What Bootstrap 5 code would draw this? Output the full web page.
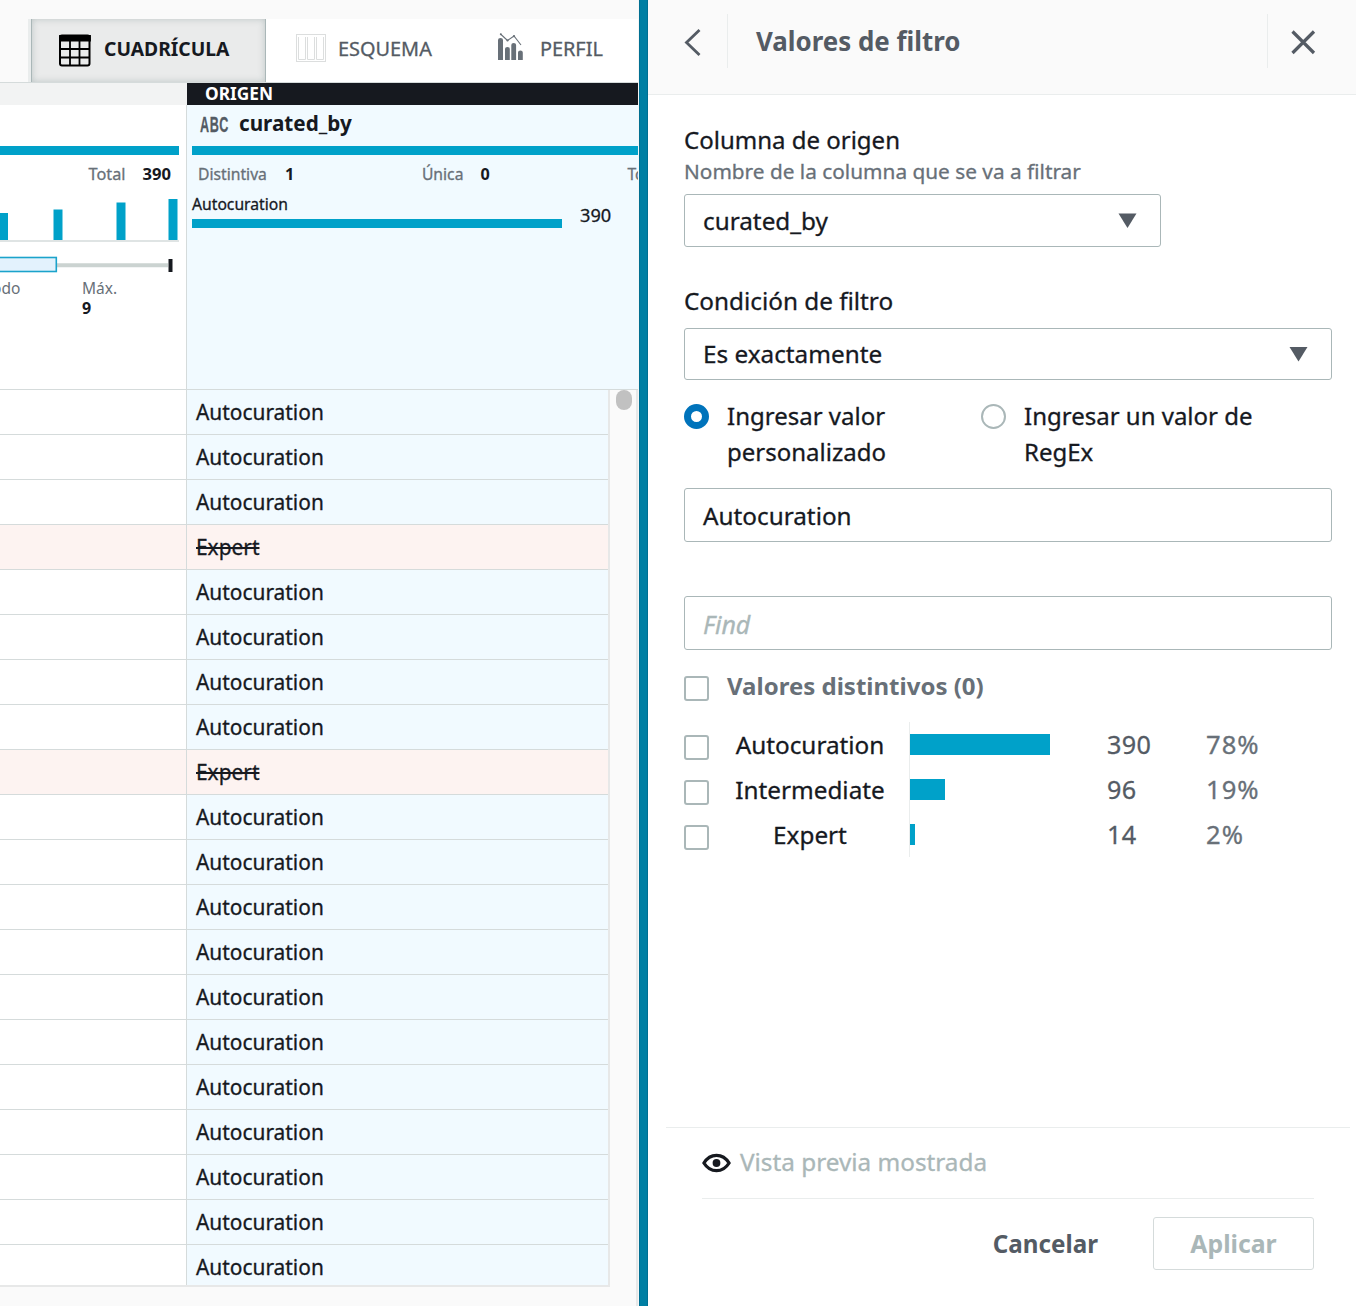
<!DOCTYPE html>
<html lang="es">
<head>
<meta charset="utf-8">
<meta name="viewport" content="width=device-width, initial-scale=1">
<title>Valores de filtro</title>
<link href="https://cdn.jsdelivr.net/npm/bootstrap@5.3.0/dist/css/bootstrap.min.css" rel="stylesheet">
<style>
  body { font-family: "Noto Sans", "Open Sans", sans-serif; color: #16191f; background: #fff; height: 1306px; overflow: hidden; line-height: 1; -webkit-text-stroke: .3px; }
  b, h1, .fw-bold, .btn-x, .origin, .col-name, .active-tab { -webkit-text-stroke: 0; }
  svg { display: block; flex: none; }
  .app { height: 1306px; }
  /* left pane */
  .grid-pane { width: 639px; background: #fafafa; padding-top: 19px; border-right: 1px solid #f4f6f6; }
  .tabs-line { border-bottom: 1px solid #d5dbdb; height: 64px; padding-left: 28px; }
  .tabs-line nav { font-size: 19.9px; color: #545b64; }
  .view-tab { height: 63px; }
  .view-tab > span, .active-in > span { margin-top: -3px; }
  .view-tab.active-tab { width: 238px; border-left: 3px solid #eaeded; background: #eaebeb; color: #16191f; font-weight: 700; font-size: 19.3px; }
  .active-in { border: 1px solid #aab7b8; border-width: 0 1px 0 1px; box-shadow: inset 0 0 7px rgba(120,140,140,.4); padding-left: 26px; gap: 13px; }
  .col-l { width: 187px; border-right: 1px solid #d5dbdb; background: #fff; }
  .col-r { background: #f1faff; }
  .band { height: 22px; }
  .band .col-l { background: #f2f3f3; border-right: 0; }
  .band .origin { background: #16191f; color: #fff; font-weight: 700; font-size: 17.3px; padding-left: 18px; line-height: 21px; }
  .stats { height: 285px; border-bottom: 1px solid #d5dbdb; }
  .teal { background: #00a1c9; }
  .quality { height: 9px; }
  .stat-line { font-size: 15.7px; line-height: 20px; height: 20px; white-space: nowrap; color: #687078; }
  .stat-line b { color: #16191f; font-size: 16.2px; }
  .abc { font-family: "Liberation Sans", sans-serif; font-weight: 700; font-size: 22.5px; color: #545b64; width: 28px; line-height: 31px; margin-left: -1px; }
  .abc span { display: inline-block; transform: scaleX(.56); transform-origin: 0 50%; letter-spacing: 1px; }
  .col-name { font-weight: 700; font-size: 20.7px; line-height: 28px; }
  .rows-box { width: 610px; height: 897px; overflow: hidden; border: solid #e7e8e8; border-width: 0 2px 2px 0; }
  .data-row { height: 45px; font-size: 20.9px; line-height: 44px; border-bottom: 1px solid #d5dbdb; flex: none; }
  .data-row .col-r { padding-left: 9px; }
  .data-row.dropped > div { background: #fdf3f1; }
  .data-row.dropped { text-decoration: line-through; text-decoration-thickness: 2px; }
  .track { width: 28px; border-right: 2px solid #e7e8e8; }
  .thumb { width: 16px; height: 20px; border-radius: 8px; background: #c1c1c1; margin-left: 6px; }
  .splitter { width: 9px; background: #007fa3; border: solid #006f92; border-width: 0 1px; }
  /* right pane */
  .head-bar { height: 95px; background: #fafafa; border-bottom: 1px solid #eaeded; padding-top: 14px; }
  .head-in { height: 54px; }
  .head-in h1 { font-size: 25.9px; line-height: 54px; font-weight: 700; color: #545b64; margin: 0; padding-left: 28px; }
  .rule-v { width: 1px; background: #eaeded; height: 54px; }
  .panel-body { padding: 0 24px 0 36px; height: 1032px; font-size: 24.3px; }
  .fld { border: 1px solid #aab7b8; border-radius: 3px; padding: 0 23px 0 18px; background: #fff; }
  .nudge { padding-top: 2px; }
  .hint { font-size: 20.8px; color: #687078; line-height: 30px; }
  .radio-c { width: 25px; height: 25px; border: 2px solid #aab7b8; border-radius: 50%; margin-top: 6px; flex: none; }
  .radio-c.on { border: 7.5px solid #0073bb; }
  .lh36 { line-height: 36px; }
  .check-b { width: 25px; height: 25px; border: 2px solid #aab7b8; border-radius: 3px; flex: none; }
  .val-row { height: 45px; }
  .val-row .check-b { margin-top: 6px; }
  .val-name { width: 202px; margin-right: -2px; padding-top: 2px; text-align: center; }
  .val-bar { width: 198px; height: 45px; border-left: 1px solid #eaeded; }
  .val-bar div { height: 21px; background: #00a1c9; }
  .val-n { width: 99px; padding-top: 1px; font-size: 25.2px; letter-spacing: .3px; color: #545b64; }
  .val-p { padding-top: 1px; font-size: 25.6px; color: #687078; letter-spacing: 1px; }
  .foot { margin: 0 6px 0 18px; border-top: 1px solid #eaeded; padding: 0 36px; font-size: 24.3px; }
  .foot-a { height: 71px; border-bottom: 1px solid #eaeded; gap: 9px; color: #aab7b8; }
  .foot-a span { margin-top: -2px; }
  .btn-x { font-weight: 700; font-size: 24.2px; line-height: 51px; height: 53px; padding: 0; border-radius: 3px; color: #545b64; }
  .btn-x:disabled { width: 161px; border: 1px solid #d5dbdb; color: #aab7b8; opacity: 1; font-size: 24.8px; }
</style>
<script src="https://cdn.jsdelivr.net/npm/bootstrap@5.3.0/dist/js/bootstrap.bundle.min.js"></script>
</head>
<body>
<div class="app d-flex">
  <section class="grid-pane flex-shrink-0 overflow-hidden">
    <div class="tabs-line d-flex">
      <nav class="d-flex flex-grow-1 bg-white">
        <div class="view-tab active-tab d-flex flex-shrink-0">
          <div class="active-in d-flex align-items-center flex-grow-1">
            <svg width="33" height="33" viewBox="0 0 33 33"><rect x="2" y="1.500" width="29.500" height="30" rx="2" fill="none" stroke="#000" stroke-width="2"/><path d="M2 2h30v4.500H2zM12 6v25M21.500 6v25M2 15h30M2 23.500h30" stroke="#000" stroke-width="1.800" fill="#000"/></svg>
            <span>CUADRÍCULA</span>
          </div>
        </div>
        <div class="view-tab d-flex align-items-center" style="padding-left:30px;gap:12px">
          <svg width="30" height="28" viewBox="0 0 30 28" fill="none" stroke="#dcdede" stroke-width="1" style="margin-top:-5px"><rect x=".5" y=".5" width="29" height="27"/><path d="M2.500 3v22.500h7V3M11.500 3v22.500h7V3M20.500 3v22.500h7V3"/></svg>
          <span>ESQUEMA</span>
        </div>
        <div class="view-tab d-flex align-items-center" style="padding-left:66px;gap:17px">
          <svg width="25" height="28" viewBox="0 0 25 28" fill="#687078" style="margin-top:-7px"><path d="M0 27V7a2.500 2 0 0 1 5 0V27zM7 27V16a2.400 2 0 0 1 4.800 0v11zM13.300 27V12a2.400 2 0 0 1 4.800 0v15zM20 27v-7.500a2.400 2 0 0 1 4.800 0V27z"/><path d="M2.500 1 9.500 7.500l6.500-4.500 7 9" fill="none" stroke="#687078" stroke-width="1.100"/><circle cx="2.800" cy="1.200" r="1"/><circle cx="9.500" cy="7.500" r="1.100"/><circle cx="16" cy="3.200" r="1.100"/></svg>
          <span>PERFIL</span>
        </div>
      </nav>
    </div>
    <div class="band d-flex"><div class="col-l flex-shrink-0"></div><div class="origin flex-grow-1">ORIGEN</div></div>
    <div class="stats d-flex">
      <div class="col-l flex-shrink-0 overflow-hidden">
        <div class="quality teal" style="margin:41px 7px 0 0"></div>
        <div class="stat-line d-flex justify-content-end" style="margin:9px 0 11px;padding-right:15px;gap:17px"><span style="font-size:16.3px">Total</span><b style="font-size:16.6px">390</b></div>
        <svg width="186" height="134" viewBox="0 0 186 134"><path d="M0 46h179" stroke="#d5dbdb" stroke-width="1.500"/><path d="M0 18h8v27H0zM53.500 14.500h9v30.500h-9zM116.500 7.500h9v37.500h-9zM168.500 4h9v41h-9z" fill="#00a1c9"/><path d="M57 70.300h111" stroke="#cbd3d1" stroke-width="4"/><rect x="-5" y="62.500" width="61.300" height="14" fill="#e3f2fd" stroke="#1ba3cb" stroke-width="1.600"/><path d="M170.500 64v13" stroke="#16191f" stroke-width="4"/>
          <g font-size="15.500" fill="#687078"><text x="-8" y="99">odo</text><text x="82" y="99">Máx.</text></g><text x="82" y="119" font-size="16" font-weight="700" fill="#16191f">9</text></svg>
      </div>
      <div class="col-r flex-grow-1 overflow-hidden" style="padding-left:5px">
        <div class="d-flex" style="padding:4px 0 0 9px;height:41px"><div class="abc"><span>ABC</span></div><span class="col-name" style="margin-left:11px">curated_by</span></div>
        <div class="quality teal"></div>
        <div class="stat-line d-flex" style="margin-top:9px;padding-left:6px"><span>Distintiva</span><b class="flex-shrink-0" style="margin-left:18px;width:137px">1</b><span>Única</span><b class="flex-shrink-0" style="margin-left:17px;width:147px">0</b><span>Total</span></div>
        <div class="d-flex" style="margin-top:10px">
          <div style="width:370px"><div style="font-size:15.7px;line-height:20px;height:25px">Autocuration</div><div class="quality teal"></div></div>
          <div style="font-size:18.2px;line-height:20px;margin:11px 0 0 18px">390</div>
        </div>
      </div>
    </div>
    <div class="d-flex" style="height:916px">
      <div class="rows-box d-flex flex-column flex-shrink-0" id="rows"></div>
      <div class="track"><div class="thumb"></div></div>
    </div>
  </section>
  <div class="splitter flex-shrink-0"></div>
  <aside class="flex-grow-1 bg-white">
    <header class="head-bar">
      <div class="head-in d-flex align-items-center">
        <svg width="79" height="54" viewBox="0 0 79 54"><path d="M51.500 16 38.500 28.500 51.500 41" fill="none" stroke="#545b64" stroke-width="2.800"/></svg>
        <div class="rule-v"></div>
        <h1 class="flex-grow-1">Valores de filtro</h1>
        <div class="rule-v"></div>
        <svg width="88" height="54" viewBox="0 0 88 54"><path d="m24.500 17.500 21.500 21.500M46 17.500 24.500 39" fill="none" stroke="#545b64" stroke-width="3.200"/></svg>
      </div>
    </header>
    <div class="panel-body">
      <div style="padding-top:27px;line-height:36px;font-size:24px">Columna de origen</div>
      <div class="hint" style="margin-top:-2px">Nombre de la columna que se va a filtrar</div>
      <div class="fld d-flex align-items-center justify-content-between" style="width:477px;height:53px;margin-top:8px"><span class="nudge">curated_by</span><svg width="19" height="16" viewBox="0 0 19 16"><path d="M.5 .5h18L9.500 15z" fill="#545b64"/></svg></div>
      <div style="margin-top:36px;line-height:36px">Condición de filtro</div>
      <div class="fld d-flex align-items-center justify-content-between" style="height:52px;margin-top:9px"><span>Es exactamente</span><svg width="19" height="16" viewBox="0 0 19 16"><path d="M.5 1h18L9.500 15.500z" fill="#545b64"/></svg></div>
      <div class="d-flex lh36" style="margin-top:18px;font-size:24px">
        <div class="d-flex" style="width:297px;gap:18px"><span class="radio-c on"></span><div style="width:180px">Ingresar valor personalizado</div></div>
        <div class="d-flex" style="gap:18px"><span class="radio-c"></span><div style="width:250px">Ingresar un valor de RegEx</div></div>
      </div>
      <div class="fld d-flex align-items-center" style="height:54px;margin-top:18px"><span class="nudge">Autocuration</span></div>
      <div class="fld d-flex align-items-center fst-italic" style="height:54px;margin-top:54px;color:#aab7b8;font-size:25px"><span class="nudge">Find</span></div>
      <div class="d-flex align-items-start lh36" style="margin-top:18px;gap:18px"><span class="check-b" style="margin-top:8px"></span><span class="fw-bold" style="font-size:24px;color:#687078">Valores distintivos (0)</span></div>
      <div style="margin-top:18px">
        <div class="val-row d-flex align-items-center"><span class="check-b"></span><span class="val-name">Autocuration</span><div class="val-bar d-flex align-items-center"><div style="width:140px"></div></div><span class="val-n">390</span><span class="val-p">78%</span></div>
        <div class="val-row d-flex align-items-center"><span class="check-b"></span><span class="val-name">Intermediate</span><div class="val-bar d-flex align-items-center"><div style="width:35px"></div></div><span class="val-n">96</span><span class="val-p">19%</span></div>
        <div class="val-row d-flex align-items-center"><span class="check-b"></span><span class="val-name">Expert</span><div class="val-bar d-flex align-items-center"><div style="width:5px"></div></div><span class="val-n">14</span><span class="val-p">2%</span></div>
      </div>
    </div>
    <footer class="foot">
      <div class="foot-a d-flex align-items-center"><svg width="29" height="20" viewBox="0 0 29 20"><path d="M1.900 10C5 5 9.500 2.300 14.500 2.300S24 5 27.100 10C24 15 19.500 17.700 14.500 17.700S5 15 1.900 10z" fill="none" stroke="#16191f" stroke-width="3.300" stroke-linejoin="round"/><circle cx="14.500" cy="10" r="3.900" fill="#16191f"/></svg><span>Vista previa mostrada</span></div>
      <div class="d-flex justify-content-end" style="padding-top:18px;gap:55px"><button class="btn btn-x border-0">Cancelar</button><button class="btn btn-x" disabled>Aplicar</button></div>
    </footer>
  </aside>
</div>
<script>
  // 20 visible records; the filter removes the rows whose value is not "Autocuration"
  const dropped = [3, 8];
  document.getElementById('rows').innerHTML = Array.from({ length: 20 }, (_, i) => {
    const out = dropped.includes(i);
    return `<div class="data-row d-flex${out ? ' dropped' : ''}"><div class="col-l flex-shrink-0"></div><div class="col-r flex-grow-1">${out ? 'Expert' : 'Autocuration'}</div></div>`;
  }).join('');
</script>
</body>
</html>
